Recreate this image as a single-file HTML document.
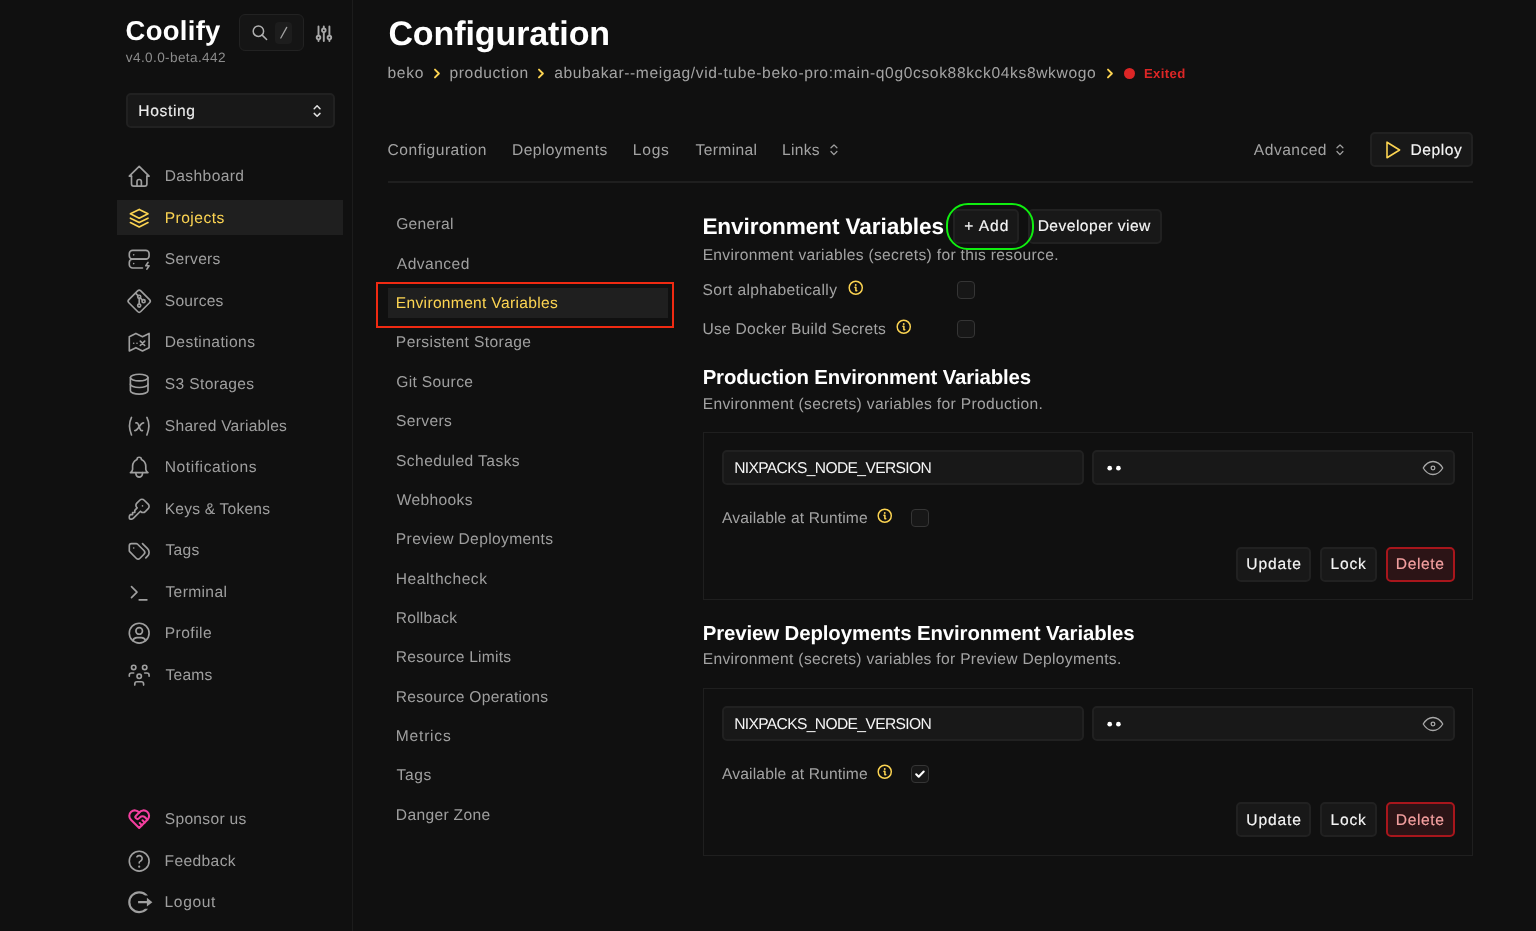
<!DOCTYPE html>
<html><head><meta charset="utf-8">
<style>
*{box-sizing:border-box;margin:0;padding:0}
html,body{width:1536px;height:931px;overflow:hidden;background:#101010;font-family:"Liberation Sans",sans-serif}
.t{position:absolute;white-space:nowrap;line-height:1;text-rendering:geometricPrecision}
.ic{position:absolute;fill:none;stroke:currentColor;stroke-linecap:round;stroke-linejoin:round;overflow:visible}
</style></head><body><div id="root" style="position:absolute;left:0;top:0;width:1536px;height:931px;will-change:transform">
<div style="position:absolute;left:352px;top:0px;width:1px;height:931px;background:#1c1c1c"></div>
<div class="t" style="left:125.52px;top:17.01px;font-size:27.4px;letter-spacing:0.334px;color:#ffffff;font-weight:700;">Coolify</div>
<div class="t" style="left:125.81px;top:51.01px;font-size:13.6px;letter-spacing:0.377px;color:#8c8c8c;">v4.0.0-beta.442</div>
<div style="position:absolute;left:239px;top:14px;width:65px;height:37px;border:1px solid #222222;background:#151515;border-radius:6px"></div>
<div style="position:absolute;left:275px;top:22px;width:17px;height:22px;background:#1d1d1d;border-radius:4px"></div>
<svg class="ic" style="left:251px;top:24px;width:18px;height:18px;color:#b0b0b0;stroke-width:1.5;" viewBox="0 0 18 18"><circle cx="7.4" cy="7.2" r="5.2"/><path d="M11.2 11.1l4.4 4.4"/></svg>
<svg class="ic" style="left:279px;top:25px;width:10px;height:15px;color:#a0a0a0;stroke-width:1.3;" viewBox="0 0 10 15"><path d="M7.7 2.4L1.8 13"/></svg>
<svg class="ic" style="left:314px;top:24px;width:20px;height:20px;color:#a8a8a8;stroke-width:1.9;" viewBox="0 0 20 20"><path d="M4.5 2.5v14.5M9.8 2.5v14.5M15.4 2.5v14.5"/><circle cx="4.5" cy="13.6" r="1.8" fill="#101010"/><circle cx="9.8" cy="6.3" r="1.8" fill="#101010"/><circle cx="15.4" cy="13.6" r="1.8" fill="#101010"/></svg>
<div style="position:absolute;left:126px;top:93px;width:209px;height:35px;border:2px solid #212121;background:#181818;border-radius:5px"></div>
<div class="t" style="left:138.24px;top:104.41px;font-size:15.6px;letter-spacing:0.646px;color:#ececec;-webkit-text-stroke:0.15px currentColor;">Hosting</div>
<svg class="ic" style="left:311px;top:103px;width:12px;height:16px;color:#e0e0e0;stroke-width:1.5;" viewBox="0 0 12 16"><path d="M3.2 5.7L6.1 2.8L9 5.7M3.2 10.4L6.1 13.2L9 10.4"/></svg>
<div style="position:absolute;left:117px;top:200px;width:226px;height:35px;background:#1f1f1f"></div>
<svg class="ic" style="left:125.99999999999999px;top:162.60000000000002px;width:26.4px;height:26.4px;color:#9f9f9f;stroke-width:1.5;" viewBox="0 0 24 24"><path d="M5 12H3l9-9l9 9h-2"/><path d="M5 12v7a2 2 0 0 0 2 2h10a2 2 0 0 0 2-2v-7"/><path d="M10 21v-4a2 2 0 0 1 4 0v4"/></svg>
<div class="t" style="left:164.69px;top:168.81px;font-size:15.6px;letter-spacing:0.376px;color:#9f9f9f;">Dashboard</div>
<svg class="ic" style="left:125.99999999999999px;top:204.8px;width:26.4px;height:26.4px;color:#fcd452;stroke-width:1.5;" viewBox="0 0 24 24"><path d="M12 4L4 8l8 4l8-4l-8-4"/><path d="M4 12l8 4l8-4"/><path d="M4 16l8 4l8-4"/></svg>
<div class="t" style="left:164.69px;top:211.01px;font-size:15.6px;letter-spacing:0.463px;color:#fcd452;">Projects</div>
<svg class="ic" style="left:125.99999999999999px;top:245.8px;width:26.4px;height:26.4px;color:#9f9f9f;stroke-width:1.5;" viewBox="0 0 24 24"><path d="M3 7a3 3 0 0 1 3-3h12a3 3 0 0 1 3 3v2a3 3 0 0 1-3 3H6a3 3 0 0 1-3-3z"/><path d="M15 20H6a3 3 0 0 1-3-3v-2a3 3 0 0 1 3-3h12"/><path d="M7 8v.01"/><path d="M7 16v.01"/><path d="M20 15l-2 3h3l-2 3"/></svg>
<div class="t" style="left:164.86px;top:252.01px;font-size:15.6px;letter-spacing:0.301px;color:#9f9f9f;">Servers</div>
<svg class="ic" style="left:125.99999999999999px;top:288.0px;width:26.4px;height:26.4px;color:#9f9f9f;stroke-width:1.5;" viewBox="0 0 24 24"><circle cx="16" cy="12" r="1.4"/><circle cx="12" cy="8" r="1.4"/><circle cx="12" cy="16" r="1.4"/><path d="M12 14.6V9.4"/><path d="M15 11l-2-2"/><path d="M11 7L9.1 5.1"/><path d="M13.446 2.6l7.955 7.954a2.045 2.045 0 0 1 0 2.892l-7.955 7.955a2.045 2.045 0 0 1-2.892 0L2.599 13.446a2.045 2.045 0 0 1 0-2.892l7.955-7.955a2.045 2.045 0 0 1 2.892 0z"/></svg>
<div class="t" style="left:164.86px;top:294.21px;font-size:15.6px;letter-spacing:0.22px;color:#9f9f9f;">Sources</div>
<svg class="ic" style="left:125.99999999999999px;top:329.0px;width:26.4px;height:26.4px;color:#9f9f9f;stroke-width:1.5;" viewBox="0 0 24 24"><path d="M3 7l6-3l6 3l6-3v13l-6 3l-6-3l-6 3z" stroke-linejoin="round"/><path d="M7 13h.01M10 13h.01"/><path d="M13 11l4 4m0-4l-4 4"/></svg>
<div class="t" style="left:164.69px;top:335.21px;font-size:15.6px;letter-spacing:0.404px;color:#9f9f9f;">Destinations</div>
<svg class="ic" style="left:125.99999999999999px;top:370.8px;width:26.4px;height:26.4px;color:#9f9f9f;stroke-width:1.5;" viewBox="0 0 24 24"><ellipse cx="12" cy="6" rx="8" ry="3"/><path d="M4 6v6a8 3 0 0 0 16 0V6"/><path d="M4 12v6a8 3 0 0 0 16 0v-6"/></svg>
<div class="t" style="left:164.86px;top:377.01px;font-size:15.6px;letter-spacing:0.335px;color:#9f9f9f;">S3 Storages</div>
<svg class="ic" style="left:125.99999999999999px;top:413.0px;width:26.4px;height:26.4px;color:#9f9f9f;stroke-width:1.5;" viewBox="0 0 24 24"><path d="M5 4c-2.5 5-2.5 10 0 16m14-16c2.5 5 2.5 10 0 16M9 9h1c1 0 1 1 2.016 3.527C13 15 13 16 14 16h1"/><path d="M8 16c1.5 0 3-2 4-3.5S14.5 9 16 9"/></svg>
<div class="t" style="left:164.86px;top:419.21px;font-size:15.6px;letter-spacing:0.238px;color:#9f9f9f;">Shared Variables</div>
<svg class="ic" style="left:125.99999999999999px;top:454.0px;width:26.4px;height:26.4px;color:#9f9f9f;stroke-width:1.5;" viewBox="0 0 24 24"><path d="M10 5a2 2 0 1 1 4 0a7 7 0 0 1 4 6v3a4 4 0 0 0 2 3H4a4 4 0 0 0 2-3v-3a7 7 0 0 1 4-6"/><path d="M9 17v1a3 3 0 0 0 6 0v-1"/></svg>
<div class="t" style="left:164.69px;top:460.21px;font-size:15.6px;letter-spacing:0.57px;color:#9f9f9f;">Notifications</div>
<svg class="ic" style="left:125.99999999999999px;top:495.7px;width:26.4px;height:26.4px;color:#9f9f9f;stroke-width:1.5;" viewBox="0 0 24 24"><path d="M16.555 3.843l3.602 3.602a2.877 2.877 0 0 1 0 4.069l-2.643 2.643a2.877 2.877 0 0 1-4.069 0l-.301-.301l-6.558 6.558a2 2 0 0 1-1.239.578L5.172 21H4a1 1 0 0 1-1-1v-1.172a2 2 0 0 1 .586-1.414L4 17h2v-2h2v-2l2.144-2.144l-.301-.301a2.877 2.877 0 0 1 0-4.069l2.643-2.643a2.877 2.877 0 0 1 4.069 0z"/><path d="M15 9h.01"/></svg>
<div class="t" style="left:164.69px;top:501.91px;font-size:15.6px;letter-spacing:0.199px;color:#9f9f9f;">Keys &amp; Tokens</div>
<svg class="ic" style="left:125.99999999999999px;top:537.0999999999999px;width:26.4px;height:26.4px;color:#9f9f9f;stroke-width:1.5;" viewBox="0 0 24 24"><path d="M3 8v4.172a2 2 0 0 0 .586 1.414l5.71 5.71a2.41 2.41 0 0 0 3.408 0l3.592-3.592a2.41 2.41 0 0 0 0-3.408l-5.71-5.71A2 2 0 0 0 9.172 6H5a2 2 0 0 0-2 2z"/><path d="M18 19l1.592-1.592a4.82 4.82 0 0 0 0-6.816L15 6"/><path d="M7 10h-.01"/></svg>
<div class="t" style="left:165.45px;top:543.30px;font-size:15.6px;letter-spacing:0.335px;color:#9f9f9f;">Tags</div>
<svg class="ic" style="left:125.99999999999999px;top:579.0px;width:26.4px;height:26.4px;color:#9f9f9f;stroke-width:1.5;" viewBox="0 0 24 24"><path d="M5 7l5 5l-5 5"/><path d="M12 19h7"/></svg>
<div class="t" style="left:165.45px;top:585.21px;font-size:15.6px;letter-spacing:0.364px;color:#9f9f9f;">Terminal</div>
<svg class="ic" style="left:125.99999999999999px;top:619.8px;width:26.4px;height:26.4px;color:#9f9f9f;stroke-width:1.5;" viewBox="0 0 24 24"><circle cx="12" cy="12" r="9"/><circle cx="12" cy="10" r="3"/><path d="M6.168 18.849A4 4 0 0 1 10 16h4a4 4 0 0 1 3.834 2.855"/></svg>
<div class="t" style="left:164.69px;top:626.00px;font-size:15.6px;letter-spacing:0.468px;color:#9f9f9f;">Profile</div>
<svg class="ic" style="left:125.99999999999999px;top:662.0px;width:26.4px;height:26.4px;color:#9f9f9f;stroke-width:1.5;" viewBox="0 0 24 24"><path d="M10 13a2 2 0 1 0 4 0a2 2 0 0 0-4 0"/><path d="M8 21v-1a2 2 0 0 1 2-2h4a2 2 0 0 1 2 2v1"/><path d="M15 5a2 2 0 1 0 4 0a2 2 0 0 0-4 0"/><path d="M17 10h2a2 2 0 0 1 2 2v1"/><path d="M5 5a2 2 0 1 0 4 0a2 2 0 0 0-4 0"/><path d="M3 13v-1a2 2 0 0 1 2-2h2"/></svg>
<div class="t" style="left:165.45px;top:668.21px;font-size:15.6px;letter-spacing:0.252px;color:#9f9f9f;">Teams</div>
<svg class="ic" style="left:125.99999999999999px;top:806.0px;width:26.4px;height:26.4px;color:#f43f9f;stroke-width:1.9;" viewBox="0 0 24 24"><path d="M19.5 12.572L12 20l-7.5-7.428A5 5 0 1 1 12 6.006a5 5 0 1 1 7.5 6.572"/><path d="M12 6L8.707 9.293a1 1 0 0 0 0 1.414l.543.543c.69.69 1.81.69 2.5 0l1-1a3.182 3.182 0 0 1 4.5 0l2.25 2.25"/><path d="M12.5 15.5l2 2"/><path d="M15 13l2 2"/></svg>
<div class="t" style="left:164.71px;top:812.21px;font-size:15.6px;letter-spacing:0.305px;color:#9f9f9f;">Sponsor us</div>
<svg class="ic" style="left:125.99999999999999px;top:847.5px;width:26.4px;height:26.4px;color:#9f9f9f;stroke-width:1.5;" viewBox="0 0 24 24"><circle cx="12" cy="12" r="9"/><path d="M12 17v.01" stroke-width="2"/><path d="M12 13.5a1.5 1.5 0 0 1 1-1.5a2.6 2.6 0 1 0-3-4"/></svg>
<div class="t" style="left:164.54px;top:853.71px;font-size:15.6px;letter-spacing:0.372px;color:#9f9f9f;">Feedback</div>
<svg class="ic" style="left:125.99999999999999px;top:889.0px;width:26.4px;height:26.4px;color:#9f9f9f;stroke-width:1.6;" viewBox="0 0 24 24"><path fill="currentColor" stroke="none" d="M12 22C6.477 22 2 17.523 2 12S6.477 2 12 2a9.985 9.985 0 0 1 8 4h-2.71a8 8 0 1 0 .001 12h2.71A9.985 9.985 0 0 1 12 22zm7-6v-3h-8v-2h8V8l5 4-5 4z"/></svg>
<div class="t" style="left:164.54px;top:895.21px;font-size:15.6px;letter-spacing:0.636px;color:#9f9f9f;">Logout</div>
<div class="t" style="left:388.41px;top:17.00px;font-size:34px;letter-spacing:-0.094px;color:#ffffff;font-weight:700;">Configuration</div>
<div class="t" style="left:387.39px;top:65.60px;font-size:15.6px;letter-spacing:0.721px;color:#a3a3a3;">beko</div>
<svg class="ic" style="left:433px;top:67.9px;width:8px;height:11px;color:#fcd452;stroke-width:1.9;" viewBox="0 0 8 11"><path d="M2 1.6l3.9 3.9l-3.9 3.9"/></svg>
<div class="t" style="left:449.38px;top:65.60px;font-size:15.6px;letter-spacing:0.663px;color:#a3a3a3;">production</div>
<svg class="ic" style="left:537px;top:67.9px;width:8px;height:11px;color:#fcd452;stroke-width:1.9;" viewBox="0 0 8 11"><path d="M2 1.6l3.9 3.9l-3.9 3.9"/></svg>
<div class="t" style="left:554.17px;top:65.60px;font-size:15.6px;letter-spacing:0.63px;color:#a3a3a3;">abubakar--meigag/vid-tube-beko-pro:main-q0g0csok88kck04ks8wkwogo</div>
<svg class="ic" style="left:1106px;top:67.9px;width:8px;height:11px;color:#fcd452;stroke-width:1.9;" viewBox="0 0 8 11"><path d="M2 1.6l3.9 3.9l-3.9 3.9"/></svg>
<div style="position:absolute;left:1123.8px;top:67.8px;width:11.4px;height:11.4px;border-radius:50%;background:#dc2626"></div>
<div class="t" style="left:1143.90px;top:66.90px;font-size:13.2px;letter-spacing:0.351px;color:#dc2626;font-weight:700;">Exited</div>
<div class="t" style="left:387.55px;top:143.01px;font-size:15.6px;letter-spacing:0.512px;color:#a3a3a3;">Configuration</div>
<div class="t" style="left:512.04px;top:143.01px;font-size:15.6px;letter-spacing:0.418px;color:#a3a3a3;">Deployments</div>
<div class="t" style="left:632.84px;top:143.01px;font-size:15.6px;letter-spacing:0.756px;color:#a3a3a3;">Logs</div>
<div class="t" style="left:695.60px;top:143.01px;font-size:15.6px;letter-spacing:0.353px;color:#a3a3a3;">Terminal</div>
<div class="t" style="left:782.04px;top:143.01px;font-size:15.6px;letter-spacing:0.284px;color:#a3a3a3;">Links</div>
<svg class="ic" style="left:828px;top:142px;width:12px;height:16px;color:#9f9f9f;stroke-width:1.3;" viewBox="0 0 12 16"><path d="M3 5.7L6 2.9L8.9 5.7M3 9.5L5.9 12.6L8.9 9.5"/></svg>
<div class="t" style="left:1253.87px;top:143.01px;font-size:15.6px;letter-spacing:0.472px;color:#a3a3a3;">Advanced</div>
<svg class="ic" style="left:1333.7px;top:142px;width:12px;height:16px;color:#9f9f9f;stroke-width:1.3;" viewBox="0 0 12 16"><path d="M3 5.7L6 2.9L8.9 5.7M3 9.5L5.9 12.6L8.9 9.5"/></svg>
<div style="position:absolute;left:1370px;top:132px;width:103px;height:35px;border:2px solid #212121;background:#181818;border-radius:5px"></div>
<svg class="ic" style="left:1384px;top:140px;width:18px;height:20px;color:#fcd452;stroke-width:1.6;" viewBox="0 0 18 20"><path d="M3 2.2v15.6L15.6 10z"/></svg>
<div class="t" style="left:1410.44px;top:143.01px;font-size:15.6px;letter-spacing:0.581px;color:#f5f5f5;-webkit-text-stroke:0.15px currentColor;">Deploy</div>
<div style="position:absolute;left:388px;top:181px;width:1085px;height:2px;background:#1f1f1f"></div>
<div style="position:absolute;left:388px;top:288px;width:280px;height:30px;background:#1f1f1f"></div>
<div class="t" style="left:396.16px;top:216.90px;font-size:15.6px;letter-spacing:0.288px;color:#9f9f9f;">General</div>
<div class="t" style="left:396.87px;top:256.81px;font-size:15.6px;letter-spacing:0.448px;color:#9f9f9f;">Advanced</div>
<div class="t" style="left:395.84px;top:296.21px;font-size:15.6px;letter-spacing:0.306px;color:#fcd452;">Environment Variables</div>
<div class="t" style="left:395.84px;top:335.31px;font-size:15.6px;letter-spacing:0.405px;color:#9f9f9f;">Persistent Storage</div>
<div class="t" style="left:396.16px;top:375.11px;font-size:15.6px;letter-spacing:0.351px;color:#9f9f9f;">Git Source</div>
<div class="t" style="left:396.01px;top:414.10px;font-size:15.6px;letter-spacing:0.364px;color:#9f9f9f;">Servers</div>
<div class="t" style="left:396.01px;top:453.51px;font-size:15.6px;letter-spacing:0.432px;color:#9f9f9f;">Scheduled Tasks</div>
<div class="t" style="left:396.75px;top:493.10px;font-size:15.6px;letter-spacing:0.334px;color:#9f9f9f;">Webhooks</div>
<div class="t" style="left:395.84px;top:532.10px;font-size:15.6px;letter-spacing:0.358px;color:#9f9f9f;">Preview Deployments</div>
<div class="t" style="left:395.84px;top:572.00px;font-size:15.6px;letter-spacing:0.534px;color:#9f9f9f;">Healthcheck</div>
<div class="t" style="left:395.84px;top:611.00px;font-size:15.6px;letter-spacing:0.213px;color:#9f9f9f;">Rollback</div>
<div class="t" style="left:395.84px;top:650.10px;font-size:15.6px;letter-spacing:0.25px;color:#9f9f9f;">Resource Limits</div>
<div class="t" style="left:395.84px;top:689.90px;font-size:15.6px;letter-spacing:0.269px;color:#9f9f9f;">Resource Operations</div>
<div class="t" style="left:395.84px;top:729.01px;font-size:15.6px;letter-spacing:0.77px;color:#9f9f9f;">Metrics</div>
<div class="t" style="left:396.60px;top:767.71px;font-size:15.6px;letter-spacing:0.602px;color:#9f9f9f;">Tags</div>
<div class="t" style="left:395.84px;top:807.90px;font-size:15.6px;letter-spacing:0.322px;color:#9f9f9f;">Danger Zone</div>
<div style="position:absolute;left:376px;top:282px;width:298px;height:46px;border:2.5px solid #f02a12"></div>
<div class="t" style="left:702.38px;top:216.01px;font-size:22.6px;letter-spacing:-0.094px;color:#ffffff;font-weight:700;">Environment Variables</div>
<div style="position:absolute;left:953px;top:209px;width:66px;height:35px;border:2px solid #212121;background:#181818;border-radius:5px"></div>
<div class="t" style="left:964.22px;top:218.91px;font-size:15.6px;letter-spacing:0.97px;color:#f5f5f5;-webkit-text-stroke:0.15px currentColor;">+ Add</div>
<div style="position:absolute;left:1028px;top:209px;width:134px;height:35px;border:2px solid #212121;background:#181818;border-radius:5px"></div>
<div class="t" style="left:1037.64px;top:218.91px;font-size:15.6px;letter-spacing:0.473px;color:#f5f5f5;-webkit-text-stroke:0.15px currentColor;">Developer view</div>
<div class="t" style="left:702.64px;top:247.61px;font-size:15.6px;letter-spacing:0.329px;color:#a3a3a3;">Environment variables (secrets) for this resource.</div>
<div style="position:absolute;left:945.8px;top:202.8px;width:88.20000000000005px;height:47.599999999999994px;border:2.4px solid #10ee10;border-radius:22px"></div>
<div class="t" style="left:702.51px;top:282.91px;font-size:15.6px;letter-spacing:0.39px;color:#a3a3a3;">Sort alphabetically</div>
<svg class="ic" style="left:846.75px;top:278.85px;width:17.5px;height:17.5px;color:#fcd452;stroke-width:2;" viewBox="0 0 24 24"><circle cx="12" cy="12" r="9"/><path d="M12 8.2h.01" stroke-width="2.6"/><path d="M11 11.5h1.2v4.5h1.2" stroke-width="2.1"/></svg>
<div style="position:absolute;left:957px;top:281px;width:17.5px;height:17.5px;border:1.3px solid #353535;background:#171717;border-radius:4px"></div>
<div class="t" style="left:702.40px;top:321.81px;font-size:15.6px;letter-spacing:0.25px;color:#a3a3a3;">Use Docker Build Secrets</div>
<svg class="ic" style="left:894.85px;top:317.85px;width:17.5px;height:17.5px;color:#fcd452;stroke-width:2;" viewBox="0 0 24 24"><circle cx="12" cy="12" r="9"/><path d="M12 8.2h.01" stroke-width="2.6"/><path d="M11 11.5h1.2v4.5h1.2" stroke-width="2.1"/></svg>
<div style="position:absolute;left:957px;top:320px;width:17.5px;height:17.5px;border:1.3px solid #353535;background:#171717;border-radius:4px"></div>
<div class="t" style="left:702.68px;top:368.21px;font-size:20.4px;letter-spacing:-0.155px;color:#ffffff;font-weight:700;">Production Environment Variables</div>
<div class="t" style="left:702.74px;top:397.01px;font-size:15.6px;letter-spacing:0.328px;color:#a3a3a3;">Environment (secrets) variables for Production.</div>
<div style="position:absolute;left:703px;top:432px;width:770px;height:167.5px;border:1px solid #1f1f1f"></div>
<div style="position:absolute;left:722px;top:450px;width:362px;height:35px;border:2px solid #212121;background:#181818;border-radius:5px"></div>
<div class="t" style="left:734.14px;top:461.01px;font-size:15.6px;letter-spacing:-0.632px;color:#f5f5f5;">NIXPACKS_NODE_VERSION</div>
<div style="position:absolute;left:1092px;top:450px;width:363px;height:35px;border:2px solid #212121;background:#181818;border-radius:5px"></div>
<svg class="ic" style="left:1104px;top:463px;width:20px;height:10px;color:#fff;stroke-width:1.6;" viewBox="0 0 20 10"><circle cx="5.7" cy="5.2" r="2.35" fill="#fff" stroke="none"/><circle cx="14.4" cy="5.2" r="2.35" fill="#fff" stroke="none"/></svg>
<svg class="ic" style="left:1420px;top:455px;width:26px;height:26px;color:#a8a8a8;stroke-width:1.2;" viewBox="0 0 24 24"><circle cx="12" cy="12" r="1.7"/><path d="M21 12c-2.4 4-5.4 6-9 6c-3.6 0-6.6-2-9-6c2.4-4 5.4-6 9-6c3.6 0 6.6 2 9 6"/></svg>
<div class="t" style="left:722.07px;top:511.11px;font-size:15.6px;letter-spacing:0.149px;color:#a3a3a3;">Available at Runtime</div>
<svg class="ic" style="left:875.95px;top:506.85px;width:17.5px;height:17.5px;color:#fcd452;stroke-width:2;" viewBox="0 0 24 24"><circle cx="12" cy="12" r="9"/><path d="M12 8.2h.01" stroke-width="2.6"/><path d="M11 11.5h1.2v4.5h1.2" stroke-width="2.1"/></svg>
<div style="position:absolute;left:911px;top:509px;width:17.5px;height:17.5px;border:1.3px solid #353535;background:#171717;border-radius:4px"></div>
<div style="position:absolute;left:1236px;top:547.3px;width:75px;height:34.40000000000009px;border:2px solid #212121;background:#181818;border-radius:5px"></div>
<div class="t" style="left:1246.30px;top:557.01px;font-size:15.6px;letter-spacing:0.845px;color:#f5f5f5;-webkit-text-stroke:0.15px currentColor;">Update</div>
<div style="position:absolute;left:1320px;top:547.3px;width:57px;height:34.40000000000009px;border:2px solid #212121;background:#181818;border-radius:5px"></div>
<div class="t" style="left:1330.54px;top:557.01px;font-size:15.6px;letter-spacing:0.805px;color:#f5f5f5;-webkit-text-stroke:0.15px currentColor;">Lock</div>
<div style="position:absolute;left:1386px;top:547.3px;width:69px;height:34.40000000000009px;border:2px solid #a8161c;background:#2c1416;border-radius:5px"></div>
<div class="t" style="left:1395.84px;top:557.01px;font-size:15.6px;letter-spacing:0.598px;color:#f4a0a0;-webkit-text-stroke:0.15px currentColor;">Delete</div>
<div class="t" style="left:702.68px;top:624.21px;font-size:20.4px;letter-spacing:-0.108px;color:#ffffff;font-weight:700;">Preview Deployments Environment Variables</div>
<div class="t" style="left:702.74px;top:652.21px;font-size:15.6px;letter-spacing:0.314px;color:#a3a3a3;">Environment (secrets) variables for Preview Deployments.</div>
<div style="position:absolute;left:703px;top:688px;width:770px;height:167.5px;border:1px solid #1f1f1f"></div>
<div style="position:absolute;left:722px;top:706px;width:362px;height:35px;border:2px solid #212121;background:#181818;border-radius:5px"></div>
<div class="t" style="left:734.14px;top:717.01px;font-size:15.6px;letter-spacing:-0.632px;color:#f5f5f5;">NIXPACKS_NODE_VERSION</div>
<div style="position:absolute;left:1092px;top:706px;width:363px;height:35px;border:2px solid #212121;background:#181818;border-radius:5px"></div>
<svg class="ic" style="left:1104px;top:719px;width:20px;height:10px;color:#fff;stroke-width:1.6;" viewBox="0 0 20 10"><circle cx="5.7" cy="5.2" r="2.35" fill="#fff" stroke="none"/><circle cx="14.4" cy="5.2" r="2.35" fill="#fff" stroke="none"/></svg>
<svg class="ic" style="left:1420px;top:711px;width:26px;height:26px;color:#a8a8a8;stroke-width:1.2;" viewBox="0 0 24 24"><circle cx="12" cy="12" r="1.7"/><path d="M21 12c-2.4 4-5.4 6-9 6c-3.6 0-6.6-2-9-6c2.4-4 5.4-6 9-6c3.6 0 6.6 2 9 6"/></svg>
<div class="t" style="left:722.07px;top:767.11px;font-size:15.6px;letter-spacing:0.149px;color:#a3a3a3;">Available at Runtime</div>
<svg class="ic" style="left:875.95px;top:762.85px;width:17.5px;height:17.5px;color:#fcd452;stroke-width:2;" viewBox="0 0 24 24"><circle cx="12" cy="12" r="9"/><path d="M12 8.2h.01" stroke-width="2.6"/><path d="M11 11.5h1.2v4.5h1.2" stroke-width="2.1"/></svg>
<div style="position:absolute;left:911px;top:765px;width:17.5px;height:17.5px;border:1.3px solid #353535;background:#171717;border-radius:4px"></div>
<svg class="ic" style="left:914px;top:768px;width:12px;height:12px;color:#ffffff;stroke-width:2.1;" viewBox="0 0 12 12"><path d="M2.2 6.3l2.5 2.4l5-5.2"/></svg>
<div style="position:absolute;left:1236px;top:802.3px;width:75px;height:34.40000000000009px;border:2px solid #212121;background:#181818;border-radius:5px"></div>
<div class="t" style="left:1246.30px;top:813.01px;font-size:15.6px;letter-spacing:0.845px;color:#f5f5f5;-webkit-text-stroke:0.15px currentColor;">Update</div>
<div style="position:absolute;left:1320px;top:802.3px;width:57px;height:34.40000000000009px;border:2px solid #212121;background:#181818;border-radius:5px"></div>
<div class="t" style="left:1330.54px;top:813.01px;font-size:15.6px;letter-spacing:0.805px;color:#f5f5f5;-webkit-text-stroke:0.15px currentColor;">Lock</div>
<div style="position:absolute;left:1386px;top:802.3px;width:69px;height:34.40000000000009px;border:2px solid #a8161c;background:#2c1416;border-radius:5px"></div>
<div class="t" style="left:1395.84px;top:813.01px;font-size:15.6px;letter-spacing:0.598px;color:#f4a0a0;-webkit-text-stroke:0.15px currentColor;">Delete</div>
</div></body></html>
